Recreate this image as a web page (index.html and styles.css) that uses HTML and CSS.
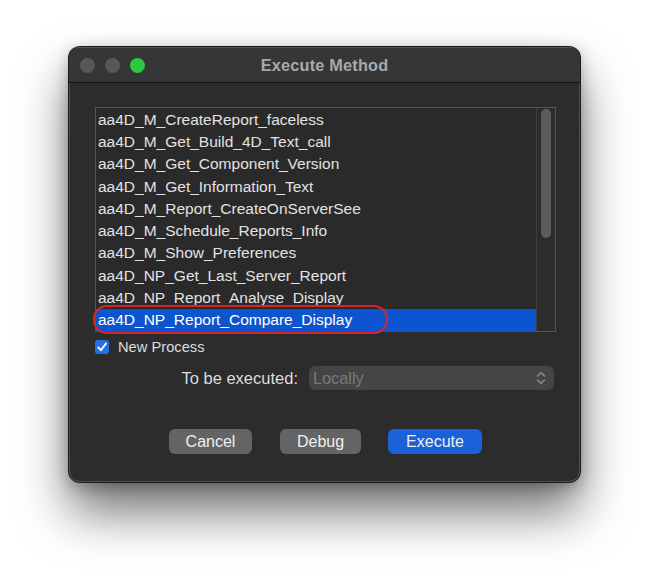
FILE: index.html
```html
<!DOCTYPE html>
<html>
<head>
<meta charset="utf-8">
<link rel="stylesheet" href="styles.css">
</head>
<body>
<div class="window">
  <div class="titlebar">
    <div class="lights">
      <span class="light grey"></span>
      <span class="light grey"></span>
      <span class="light green"></span>
    </div>
    <div class="title">Execute Method</div>
  </div>
  <div class="content">
    <div class="listbox">
      <div class="rows">
        <div class="row">aa4D_M_CreateReport_faceless</div>
        <div class="row">aa4D_M_Get_Build_4D_Text_call</div>
        <div class="row">aa4D_M_Get_Component_Version</div>
        <div class="row">aa4D_M_Get_Information_Text</div>
        <div class="row">aa4D_M_Report_CreateOnServerSee</div>
        <div class="row">aa4D_M_Schedule_Reports_Info</div>
        <div class="row">aa4D_M_Show_Preferences</div>
        <div class="row">aa4D_NP_Get_Last_Server_Report</div>
        <div class="row">aa4D_NP_Report_Analyse_Display</div>
        <div class="row selected">aa4D_NP_Report_Compare_Display<span class="highlight"></span></div>
      </div>
      <div class="scrolltrack"><div class="thumb"></div></div>
    </div>
    <div class="check-row">
      <span class="checkbox">
        <svg width="14" height="14" viewBox="0 0 14 14"><path d="M3.2 7.4 L5.9 10.2 L10.9 3.6" fill="none" stroke="#fff" stroke-width="1.9" stroke-linecap="round" stroke-linejoin="round"/></svg>
      </span>
      <span class="check-label">New Process</span>
    </div>
    <div class="exec-row">
      <span class="exec-label">To be executed:</span>
      <div class="popup">
        <span class="popup-text">Locally</span>
        <svg class="chev" width="10" height="16" viewBox="0 0 10 16"><path d="M1.5 6 L5 2.5 L8.5 6 M1.5 10 L5 13.5 L8.5 10" fill="none" stroke="#8a8a8a" stroke-width="1.5" stroke-linecap="round" stroke-linejoin="round"/></svg>
      </div>
    </div>
    <div class="buttons">
      <div class="btn cancel">Cancel</div>
      <div class="btn debug">Debug</div>
      <div class="btn primary">Execute</div>
    </div>
  </div>
</div>
</body>
</html>
```

FILE: styles.css
```css
html, body {
  margin: 0;
  padding: 0;
  background: #ffffff;
}
html { height: 100%; }
body {
  min-height: 573px;
  box-sizing: border-box;
  padding: 47px 0 0 69px;
  font-family: "Liberation Sans", Arial, sans-serif;
}
.window {
  width: 511px;
  height: 435px;
  background: #2c2c2c;
  border-radius: 11px;
  box-shadow: 0 0 0 1px #1a1a1a, inset 0 0 0 1px #505050, 0 30px 50px rgba(0,0,0,0.55), 0 4px 16px rgba(0,0,0,0.3);
  overflow: hidden;
  box-sizing: border-box;
  display: flex;
  flex-direction: column;
}
.titlebar {
  height: 35px;
  flex: none;
  background: #363636;
  border-bottom: 1px solid #141414;
  display: flex;
  align-items: center;
  position: relative;
  box-shadow: inset 0 1px 0 #555;
}
.lights {
  display: flex;
  gap: 10px;
  padding-left: 11px;
  padding-top: 2px;
}
.light {
  width: 15px;
  height: 15px;
  border-radius: 50%;
  display: block;
}
.light.grey { background: #585858; }
.light.green { background: #2bc840; }
.title {
  position: absolute;
  left: 0;
  right: 0;
  top: 9px;
  text-align: center;
  color: #a9a9a9;
  font-weight: bold;
  font-size: 16.3px;
  letter-spacing: 0.2px;
}
.content {
  padding: 24px 24px 0 26px;
  display: flex;
  flex-direction: column;
}
.listbox {
  height: 225px;
  box-sizing: border-box;
  border: 1px solid #555555;
  background: #2a2a2a;
  display: flex;
}
.rows {
  flex: 1;
  padding-top: 0.7px;
  position: relative;
}
.row {
  height: 22.3px;
  line-height: 22.3px;
  color: #e2e2e2;
  font-size: 15.5px;
  padding-left: 2px;
  white-space: nowrap;
  position: relative;
}
.row.selected {
  background: #0d55d0;
  color: #ffffff;
}
.highlight {
  position: absolute;
  left: -3px;
  top: -4.5px;
  width: 295px;
  height: 29px;
  box-sizing: border-box;
  border: 2.8px solid #d6262a;
  border-radius: 14px;
}
.scrolltrack {
  width: 19px;
  flex: none;
  border-left: 1px solid #3e3e3e;
  background: #2c2c2c;
  padding: 1px 0 0 4px;
  box-sizing: border-box;
}
.thumb {
  width: 10px;
  height: 129px;
  border-radius: 5px;
  background: #5c5c5c;
}
.check-row {
  margin-top: 8px;
  display: flex;
  align-items: center;
  height: 14px;
}
.checkbox {
  width: 14px;
  height: 14px;
  border-radius: 3px;
  background: #2270e4;
  display: block;
  flex: none;
}
.checkbox svg { display: block; }
.check-label {
  margin-left: 9px;
  color: #dcdcdc;
  font-size: 14.7px;
}
.exec-row {
  margin-top: 12px;
  display: flex;
  align-items: center;
  height: 24px;
}
.exec-label {
  width: 203px;
  text-align: right;
  color: #dcdcdc;
  font-size: 16.5px;
  flex: none;
}
.popup {
  margin-left: 11px;
  width: 245px;
  height: 24px;
  border-radius: 6px;
  background: #454545;
  display: flex;
  align-items: center;
  justify-content: space-between;
  padding: 0 8px 0 4px;
  box-sizing: border-box;
}
.popup-text {
  color: #7a7a7a;
  font-size: 16.3px;
}
.chev { display: block; }
.buttons {
  margin-top: 39px;
  display: flex;
  padding-left: 74px;
  gap: 28px;
}
.btn {
  height: 25px;
  line-height: 25px;
  border-radius: 6px;
  background: #646464;
  color: #f0f0f0;
  font-size: 16px;
  text-align: center;
}
.btn.cancel { width: 83px; }
.btn.debug { width: 81px; }
.btn.primary { width: 94px; background: #1b62da; margin-left: -1px; }
```
